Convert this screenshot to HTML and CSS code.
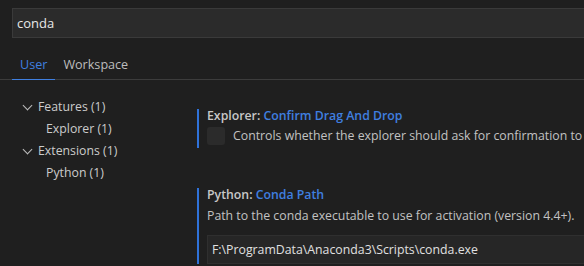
FILE: index.html
```html
<!DOCTYPE html>
<html lang="en">
<head>
    <meta charset="UTF-8">
    <title>Settings</title>
    <link rel="stylesheet" href="styles.css">
</head>
<body>
    <div class="search">conda</div>

    <div class="tabs">
        <span class="tab active">User</span>
        <span class="tab">Workspace</span>
    </div>

    <div class="main">
        <ul class="tree">
            <li class="group"><span class="chevron"></span>Features (1)</li>
            <li class="leaf">Explorer (1)</li>
            <li class="group"><span class="chevron"></span>Extensions (1)</li>
            <li class="leaf">Python (1)</li>
        </ul>

        <div class="settings">
            <div class="setting first">
                <div class="title">Explorer: <span class="name">Confirm Drag And Drop</span></div>
                <div class="check-row">
                    <span class="checkbox"></span>
                    <span class="desc">Controls whether the explorer should ask for confirmation to</span>
                </div>
            </div>

            <div class="setting second">
                <div class="title">Python: <span class="name">Conda Path</span></div>
                <div class="desc">Path to the conda executable to use for activation (version 4.4+).</div>
                <div class="input">F:\ProgramData\Anaconda3\Scripts\conda.exe</div>
            </div>
        </div>
    </div>
</body>
</html>
```

FILE: styles.css
```css
body {
    margin: 0;
    background-color: #1f1f1f;
    color: #cccccc;
    font-family: "Open Sans", "Noto Sans", sans-serif;
    font-size: 12.3px;
    overflow: hidden;
    width: 584px;
    height: 266px;
}
.search {
    margin: 8px 0 0 12px;
    height: 28px;
    line-height: 28px;
    padding-left: 4px;
    background-color: #2b2b2b;
    border: 1px solid #3a3a3a;
    border-right: none;
    color: #e8e8e8;
    font-size: 13px;
}
.tabs {
    margin-top: 12px;
    padding-left: 12px;
    display: flex;
    border-bottom: 1px solid #3c3c3c;
}
.tab {
    padding: 0 8px;
    line-height: 29px;
    color: #bdbdbd;
    margin-bottom: -1px;
    border-bottom: 1px solid transparent;
    font-size: 12.6px;
}
.tab.active {
    color: #3f7fe0;
    border-bottom-color: #3f7fe0;
}
.main {
    display: grid;
    grid-template-columns: 197px 1fr;
}
.tree {
    list-style: none;
    margin: 16px 0 0;
    padding: 0;
}
.tree li {
    height: 22px;
    line-height: 22px;
    white-space: nowrap;
}
.group {
    padding-left: 22px;
    display: flex;
    align-items: center;
}
.leaf {
    padding-left: 46px;
}
.chevron {
    width: 6px;
    height: 6px;
    border-right: 1.2px solid #bdbdbd;
    border-bottom: 1.2px solid #bdbdbd;
    transform: rotate(45deg);
    margin: -4px 7px 0 2px;
}
.settings {
    padding-top: 29px;
    white-space: nowrap;
    overflow: hidden;
}
.setting {
    border-left: 2px solid #2f72d9;
    padding-left: 8px;
}
.setting.first {
    padding-bottom: 3px;
}
.setting.second {
    margin-top: 40px;
}
.title {
    line-height: 14px;
    font-weight: 600;
    color: #c8c8c8;
}
.name {
    color: #3f7fe0;
}
.check-row {
    display: flex;
    align-items: center;
    margin-top: 4px;
}
.checkbox {
    width: 18px;
    height: 18px;
    background-color: #2b2b2b;
    border-radius: 3px;
    margin-right: 8px;
    flex-shrink: 0;
}
.desc {
    line-height: 18px;
    color: #c2c2c2;
}
.second .desc {
    margin-top: 5px;
}
.input {
    margin-top: 10px;
    height: 27px;
    line-height: 27px;
    padding-left: 4px;
    background-color: #262626;
    border: 1px solid #2f2f2f;
    border-right: none;
    color: #e0e0e0;
}
```
